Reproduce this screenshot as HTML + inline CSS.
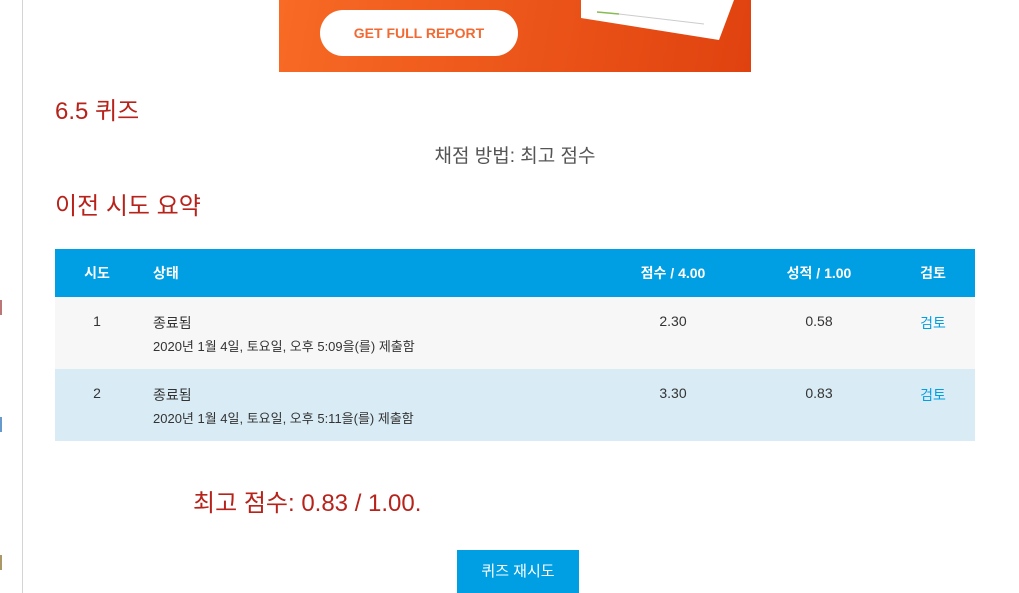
<!DOCTYPE html>
<html><head><meta charset="utf-8"><style>
body{margin:0;width:1019px;height:593px;overflow:hidden;background:#fff;font-family:"Liberation Sans","Noto Sans CJK KR",sans-serif;position:relative}
.vl{position:absolute;left:22px;top:0;width:1px;height:593px;background:#d4d4d4}
.ban{position:absolute;left:279px;top:0;width:472px;height:72px;background:linear-gradient(100deg,#f86a25,#e0420f)}
.btn1{position:absolute;left:320px;top:10px;width:198px;height:46px;background:#fff;border-radius:23px;color:#f26a33;font-weight:bold;font-size:14px;text-align:center;line-height:46px}
.abs{position:absolute}
h2{margin:0;color:#b7221a;font-weight:normal;font-size:24px}
table{position:absolute;left:55px;top:249px;width:920px;border-collapse:collapse;font-size:14px;color:#333;table-layout:fixed}
th{background:#009fe3;color:#fff;height:48px;font-weight:bold;font-size:14px;padding:0}
td{vertical-align:top;padding:16px 0 0;box-sizing:border-box}
tr.r td{height:72px}
a{color:#009fe3;text-decoration:none}
</style></head><body>
<div class="vl"></div>
<div class="abs" style="left:0;top:300px;width:2px;height:15px;background:#b77"></div>
<div class="abs" style="left:0;top:417px;width:2px;height:15px;background:#69c"></div>
<div class="abs" style="left:0;top:555px;width:2px;height:15px;background:#a96"></div>
<div class="ban"><svg width="472" height="72" style="position:absolute;left:0;top:0"><polygon points="302,0 455,0 440,40 302,18" fill="#fff"/><line x1="318" y1="12" x2="340" y2="14" stroke="#8b5" stroke-width="1.5"/><line x1="340" y1="14" x2="425" y2="24" stroke="#ccc" stroke-width="1"/></svg></div>
<div class="btn1">GET FULL REPORT</div>
<h2 class="abs" style="left:55px;top:91px">6.5 퀴즈</h2>
<div class="abs" style="left:0;width:1030px;top:141px;text-align:center;font-size:19px;color:#555">채점 방법: 최고 점수</div>
<h2 class="abs" style="left:55px;top:186px">이전 시도 요약</h2>
<table>
<colgroup><col style="width:84px"><col style="width:460px"><col style="width:148px"><col style="width:144px"><col style="width:84px"></colgroup>
<tr><th>시도</th><th style="text-align:left;padding-left:14px">상태</th><th>점수 / 4.00</th><th>성적 / 1.00</th><th>검토</th></tr>
<tr class="r" style="background:#f7f7f7"><td style="text-align:center">1</td><td style="padding-left:14px">종료됨<div style="font-size:13px;margin-top:3px">2020년 1월 4일, 토요일, 오후 5:09을(를) 제출함</div></td><td style="text-align:center">2.30</td><td style="text-align:center">0.58</td><td style="text-align:center"><a>검토</a></td></tr>
<tr class="r" style="background:#d9ecf5"><td style="text-align:center">2</td><td style="padding-left:14px">종료됨<div style="font-size:13px;margin-top:3px">2020년 1월 4일, 토요일, 오후 5:11을(를) 제출함</div></td><td style="text-align:center">3.30</td><td style="text-align:center">0.83</td><td style="text-align:center"><a>검토</a></td></tr>
</table>
<div class="abs" style="left:193px;top:483px;font-size:24px;color:#b7221a">최고 점수: 0.83 / 1.00.</div>
<div class="abs" style="left:457px;top:550px;width:122px;height:43px;background:#009fe3;color:#fff;font-size:15px;text-align:center;line-height:43px">퀴즈 재시도</div>
</body></html>
